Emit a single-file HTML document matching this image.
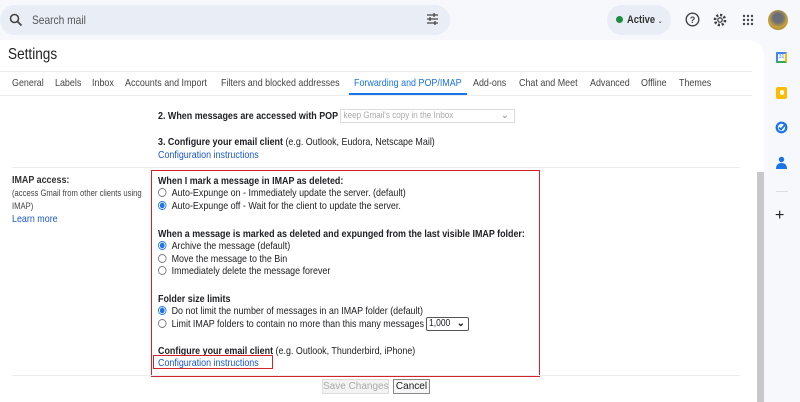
<!DOCTYPE html>
<html><head><style>
*{margin:0;padding:0;box-sizing:border-box}
body{width:800px;height:402px;overflow:hidden;background:#f6f8fc;font-family:"Liberation Sans",Arial,sans-serif;color:#202124;position:relative;font-size:10.5px}
.a{position:absolute;white-space:nowrap}
.t{transform:scaleX(.85);transform-origin:0 0}
.search{left:0;top:5px;width:450px;height:30px;background:#e9eef6;border-radius:15px}
.panel{left:0;top:40px;width:764px;height:362px;background:#fff;border-top-right-radius:16px}
.hl{position:absolute;height:1px;background:#ececec}
.tab{top:77px;font-size:10.5px;color:#444}
.b{font-weight:bold}
.lnk{color:#1a57c8}
.r{display:inline-block;width:10px;height:9px;border:1px solid #777;border-radius:50%;vertical-align:-1px;margin-right:6px}
.r.on{border-color:#1a73e8;background:radial-gradient(circle,#1a73e8 2.5px,#fff 3px)}
</style></head><body>
<div class="a search"></div>
<svg class="a" style="left:9px;top:13px" width="14" height="14" viewBox="0 0 14 14"><circle cx="5.5" cy="5.5" r="4" fill="none" stroke="#444" stroke-width="1.6"/><path d="M8.5 8.5l4 4" stroke="#444" stroke-width="1.8"/></svg>
<div class="a t" style="left:32px;top:13px;font-size:12px;color:#555">Search mail</div>
<svg class="a" style="left:426px;top:12px" width="13" height="14" viewBox="0 0 13 14" stroke="#444" stroke-width="1.3"><path d="M1 3h11M1 7h11M1 11h11M8 1v4M4 5v4M9 9v4"/></svg>
<div class="a" style="left:607px;top:5px;width:64px;height:30px;background:#e9eef6;border-radius:15px"></div>
<div class="a" style="left:616px;top:16px;width:7px;height:7px;border-radius:50%;background:#1e8e3e"></div>
<div class="a t" style="left:627px;top:14px;font-size:11px;font-weight:bold;color:#333">Active <span style="font-size:7px;font-weight:normal">⌄</span></div>
<svg class="a" style="left:685px;top:12px" width="15" height="15" viewBox="0 0 15 15"><circle cx="7.5" cy="7.5" r="6.3" fill="none" stroke="#444" stroke-width="1.4"/><text x="7.5" y="11" font-size="9" text-anchor="middle" fill="#444" font-family="Liberation Sans" font-weight="bold">?</text></svg>
<svg class="a" style="left:712px;top:12px" width="16" height="16" viewBox="0 0 16 16"><circle cx="8" cy="8" r="5" fill="none" stroke="#444" stroke-width="2.6" stroke-dasharray="2.2 1.7"/><circle cx="8" cy="8" r="2.2" fill="none" stroke="#444" stroke-width="1.3"/></svg>
<svg class="a" style="left:742px;top:14px" width="12" height="12" viewBox="0 0 12 12" fill="#444"><circle cx="2" cy="2" r="1.2"/><circle cx="6" cy="2" r="1.2"/><circle cx="10" cy="2" r="1.2"/><circle cx="2" cy="6" r="1.2"/><circle cx="6" cy="6" r="1.2"/><circle cx="10" cy="6" r="1.2"/><circle cx="2" cy="10" r="1.2"/><circle cx="6" cy="10" r="1.2"/><circle cx="10" cy="10" r="1.2"/></svg>
<div class="a" style="left:768px;top:10px;width:20px;height:20px;border-radius:50%;background:radial-gradient(circle at 50% 40%,#6a6e7a 30%,#c9a23a 60%,#8a6a2a)"></div>
<div class="a panel"></div>
<div class="a t" style="left:8px;top:46px;font-size:16px;color:#222">Settings</div>
<div class="hl" style="left:0;top:71px;width:752px"></div>
<div class="a tab t" style="left:12px">General</div>
<div class="a tab t" style="left:55px">Labels</div>
<div class="a tab t" style="left:92px">Inbox</div>
<div class="a tab t" style="left:125px">Accounts and Import</div>
<div class="a tab t" style="left:221px">Filters and blocked addresses</div>
<div class="a tab t" style="left:354px;color:#1a73e8">Forwarding and POP/IMAP</div>
<div class="a" style="left:349px;top:93px;width:118px;height:2px;background:#1a73e8"></div>
<div class="a tab t" style="left:473px">Add-ons</div>
<div class="a tab t" style="left:519px">Chat and Meet</div>
<div class="a tab t" style="left:590px">Advanced</div>
<div class="a tab t" style="left:641px">Offline</div>
<div class="a tab t" style="left:679px">Themes</div>
<div class="hl" style="left:0;top:95px;width:752px"></div>

<div class="a t" style="left:158px;top:110px"><span class="b">2. When messages are accessed with POP</span></div>
<div class="a" style="left:340px;top:109px;width:175px;height:14px;border:1px solid #ddd;font-size:9.5px;color:#aaa;line-height:12px"><span class="t" style="display:inline-block;padding-left:3px">keep Gmail's copy in the Inbox</span><span style="position:absolute;right:5px;color:#888">⌄</span></div>
<div class="a t" style="left:158px;top:136px"><span class="b">3. Configure your email client</span> (e.g. Outlook, Eudora, Netscape Mail)</div>
<div class="a lnk t" style="left:158px;top:149px">Configuration instructions</div>
<div class="hl" style="left:12px;top:167px;width:728px"></div>

<div class="a b t" style="left:12px;top:174px;color:#333">IMAP access:</div>
<div class="a t" style="left:12px;top:188px;font-size:9px;color:#444">(access Gmail from other clients using</div>
<div class="a t" style="left:12px;top:201px;font-size:9px;color:#444">IMAP)</div>
<div class="a lnk t" style="left:12px;top:213px;font-size:10.5px">Learn more</div>

<div class="a" style="left:151px;top:170px;width:389px;height:207px;border:1.5px solid #d0232c"></div>
<div class="a b t" style="left:158px;top:175px">When I mark a message in IMAP as deleted:</div>
<div class="a t" style="left:158px;top:187px"><span class="r"></span>Auto-Expunge on - Immediately update the server. (default)</div>
<div class="a t" style="left:158px;top:200px"><span class="r on"></span>Auto-Expunge off - Wait for the client to update the server.</div>
<div class="a b t" style="left:158px;top:228px">When a message is marked as deleted and expunged from the last visible IMAP folder:</div>
<div class="a t" style="left:158px;top:240px"><span class="r on"></span>Archive the message (default)</div>
<div class="a t" style="left:158px;top:253px"><span class="r"></span>Move the message to the Bin</div>
<div class="a t" style="left:158px;top:265px"><span class="r"></span>Immediately delete the message forever</div>
<div class="a b t" style="left:158px;top:293px">Folder size limits</div>
<div class="a t" style="left:158px;top:305px"><span class="r on"></span>Do not limit the number of messages in an IMAP folder (default)</div>
<div class="a t" style="left:158px;top:318px"><span class="r"></span>Limit IMAP folders to contain no more than this many messages</div>
<div class="a" style="left:426px;top:317px;width:43px;height:14px;border:1px solid #555;border-radius:2px;font-size:10px;line-height:12px;padding-left:2px"><span class="t" style="display:inline-block">1,000</span><span style="position:absolute;right:3px;font-weight:bold">⌄</span></div>
<div class="a t" style="left:158px;top:345px"><span class="b">Configure your email client</span> (e.g. Outlook, Thunderbird, iPhone)</div>
<div class="a" style="left:153px;top:355px;width:120px;height:14px;border:1.5px solid #d0232c"></div>
<div class="a lnk t" style="left:158px;top:357px;font-size:10.5px">Configuration instructions</div>
<div class="hl" style="left:12px;top:375px;width:728px"></div>
<div class="a" style="left:322px;top:379px;width:67px;height:15px;border:1px solid #ddd;background:#f3f3f3;color:#aaa;font-size:10px;text-align:center;line-height:13px">Save Changes</div>
<div class="a" style="left:393px;top:379px;width:37px;height:15px;border:1px solid #888;background:#f6f6f6;font-size:10px;text-align:center;line-height:13px">Cancel</div>
<div class="a" style="left:757px;top:172px;width:7px;height:230px;background:#c8c8c8"></div>

<div class="a" style="left:776px;top:52px;width:11px;height:11px;border:2px solid #4285f4;border-bottom-color:#34a853;border-right-color:#fbbc04;border-radius:1px;font-size:5px;color:#4285f4;text-align:center;line-height:7px">31</div>
<div class="a" style="left:776px;top:87px;width:11px;height:12px;background:#fbbc04;border-radius:2px"><div style="margin:3px auto;width:4px;height:5px;background:#fff;border-radius:2px"></div></div>
<svg class="a" style="left:775px;top:121px" width="13" height="13" viewBox="0 0 13 13"><circle cx="6.5" cy="6.5" r="4.8" fill="none" stroke="#1a73e8" stroke-width="2.2"/><path d="M4 6.5l2 2 5-6" fill="none" stroke="#1a73e8" stroke-width="1.8"/></svg>
<svg class="a" style="left:776px;top:156px" width="11" height="13" viewBox="0 0 11 13" fill="#1a73e8"><circle cx="5.5" cy="3.5" r="2.7"/><path d="M0 13c0-4 2-6 5.5-6s5.5 2 5.5 6z"/></svg>
<div class="a" style="left:776px;top:191px;width:12px;height:1px;background:#ddd"></div>
<div class="a" style="left:775px;top:208px;font-size:16px;line-height:16px;color:#222">+</div>
</body></html>
